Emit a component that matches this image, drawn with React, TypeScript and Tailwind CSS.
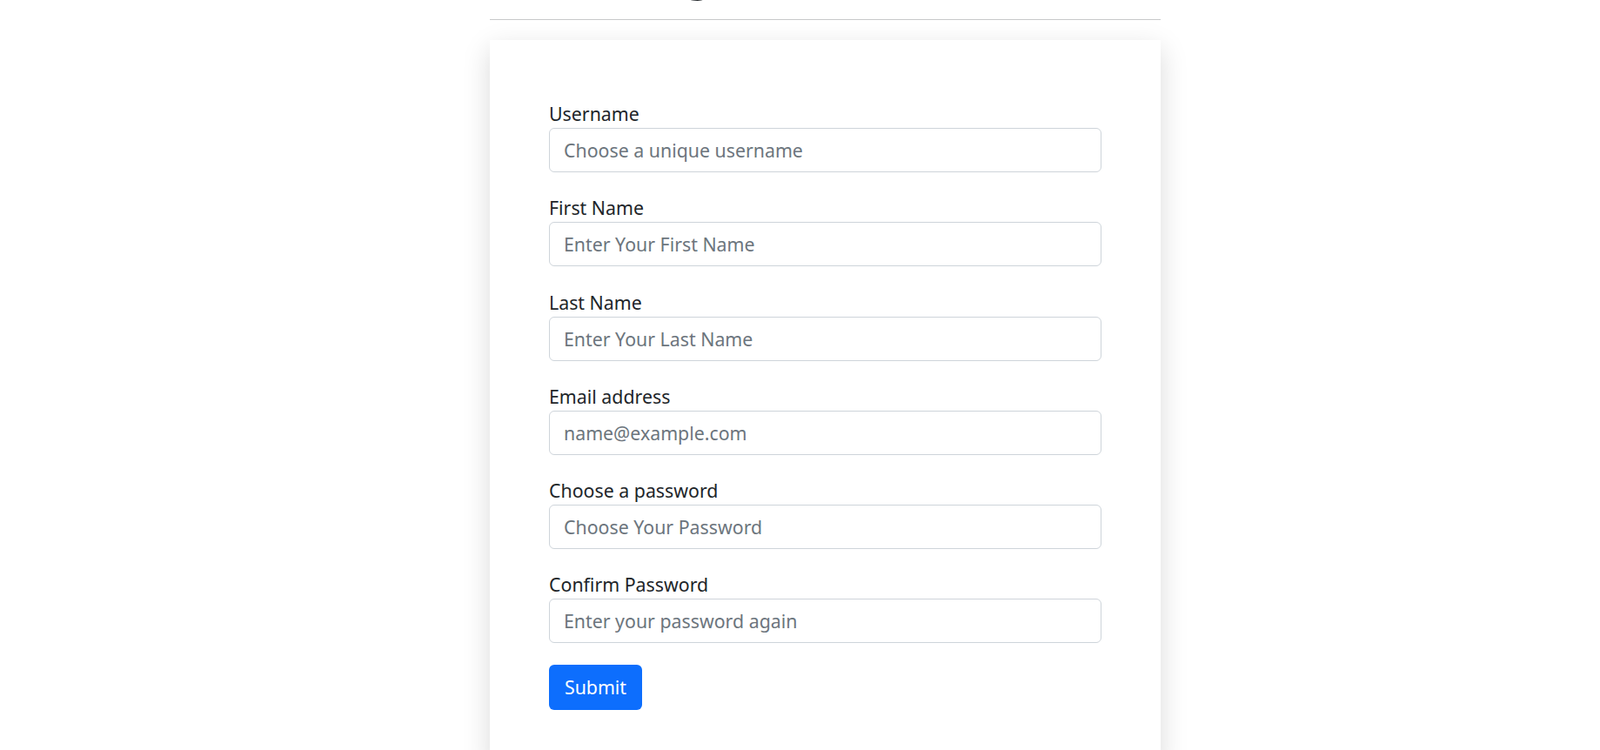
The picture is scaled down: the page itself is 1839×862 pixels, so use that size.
import React from 'react';

const fields = [
  { id: 'username', label: 'Username', type: 'text', placeholder: 'Choose a unique username' },
  { id: 'firstName', label: 'First Name', type: 'text', placeholder: 'Enter Your First Name' },
  { id: 'lastName', label: 'Last Name', type: 'text', placeholder: 'Enter Your Last Name' },
  { id: 'email', label: 'Email address', type: 'email', placeholder: 'name@example.com' },
  { id: 'password', label: 'Choose a password', type: 'password', placeholder: 'Choose Your Password' },
  { id: 'confirm', label: 'Confirm Password', type: 'password', placeholder: 'Enter your password again' },
];

const App: React.FC = () => {
  return (
    <div className="min-h-[862px] bg-white font-['Noto_Sans','Open_Sans',sans-serif] text-[#212529] overflow-hidden">
      <div className="pl-[563px]">
        <div className="w-[771px]">
          {/* page title, scrolled mostly out of view */}
          <div className="h-[22px] overflow-hidden flex flex-col justify-end">
            <h1 className="text-center pl-[4px] text-[53px] leading-[64px] font-medium mb-[22px] shrink-0">
              Registration Form
            </h1>
          </div>
          <hr className="border-0 border-t border-[#c8c9ca]" />

          <div className="mt-[23px] bg-white shadow-[0_10px_30px_rgba(0,0,0,0.15)] p-[68px] pb-[60px]">
            <form onSubmit={(e) => e.preventDefault()}>
              {fields.map((f) => (
                <div key={f.id} className="mb-[24.3px]">
                  <label htmlFor={f.id} className="block text-[21.33px] leading-[33px]">
                    {f.label}
                  </label>
                  <input
                    id={f.id}
                    type={f.type}
                    placeholder={f.placeholder}
                    className="block w-full h-[51px] px-[16px] text-[21.33px] border border-[#ced4da] rounded-[6px] bg-white outline-none placeholder:text-[#6c757d]"
                  />
                </div>
              ))}
              <button
                type="submit"
                className="h-[52px] px-[16px] w-[107px] text-[21.33px] text-white bg-[#0d6efd] rounded-[6px]"
              >
                Submit
              </button>
            </form>
          </div>
        </div>
      </div>
    </div>
  );
};

export default App;
